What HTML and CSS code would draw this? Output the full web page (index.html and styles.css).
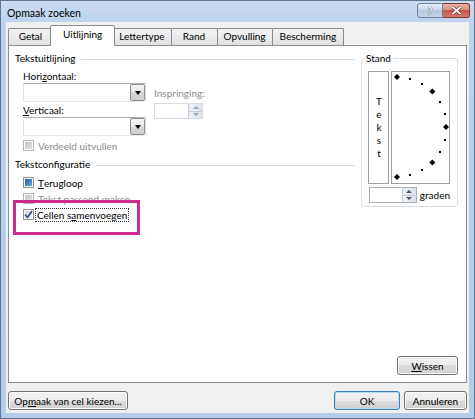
FILE: index.html
```html
<!DOCTYPE html>
<html lang="nl">
<head>
    <meta charset="UTF-8">
    <meta name="viewport" content="width=device-width, initial-scale=1.0">
    <title>Opmaak zoeken</title>
    <link rel="stylesheet" href="styles.css">
</head>
<body>
    <div class="window">
        <div class="titlebar">
            <span class="title">Opmaak zoeken</span>
            <div class="caption-buttons">
                <span class="cap-btn help">?</span>
                <span class="cap-btn close">
                    <svg width="11" height="9" viewBox="0 0 11 9"><path d="M1.5 1 L9.5 8 M9.5 1 L1.5 8" stroke="#5a2a2a" stroke-width="3.2"/><path d="M1.5 1 L9.5 8 M9.5 1 L1.5 8" stroke="#fff" stroke-width="1.8"/></svg>
                </span>
            </div>
        </div>

        <div class="client">
            <div class="tabs">
                <div class="tab">Getal</div>
                <div class="tab active">Uitlijning</div>
                <div class="tab">Lettertype</div>
                <div class="tab">Rand</div>
                <div class="tab">Opvulling</div>
                <div class="tab">Bescherming</div>
            </div>

            <div class="panel">
                <div class="panel-main">
                    <div class="left">
                        <div class="group-title">Tekstuitlijning</div>
                        <div class="align-fields">
                            <div class="combo-col">
                                <div class="label">Hori<u>z</u>ontaal:</div>
                                <div class="combo"><span class="combo-btn"></span></div>
                                <div class="label label-v"><u>V</u>erticaal:</div>
                                <div class="combo"><span class="combo-btn"></span></div>
                            </div>
                            <div class="indent-col">
                                <div class="label disabled">Inspringing:</div>
                                <div class="spin spin-indent disabled">
                                    <span class="spin-btns"><span class="up"></span><span class="down"></span></span>
                                </div>
                            </div>
                        </div>
                        <div class="check-row disabled first-check"><span class="checkbox"></span>Verdeeld uitvullen</div>

                        <div class="group-title second">Tekstconfiguratie</div>
                        <div class="check-row wrap-row"><span class="checkbox mixed"></span><u>T</u>erugloop</div>
                        <div class="check-row disabled"><span class="checkbox"></span>Tekst passend maken</div>
                        <div class="check-row"><span class="checkbox checked">
                            <svg width="9" height="9" viewBox="0 0 9 9"><path d="M1 4.5 L3.5 7.5 L8 1" fill="none" stroke="#2b4a87" stroke-width="1.6"/></svg>
                        </span><span class="focus">Cellen s<u>a</u>menvoegen</span></div>
                    </div>

                    <div class="stand">
                        <div class="legend">Stand</div>
                        <div class="dial-row">
                            <div class="tekst"><span class="tekst-label">Tekst</span></div>
                            <div class="dial">
                                <svg width="57" height="111" viewBox="0 0 57 111">
                                    <g fill="#000">
                                        <path d="M5 2 L8 5 L5 8 L2 5 Z"/>
                                        <rect x="17" y="6" width="2" height="2"/>
                                        <rect x="29" y="11" width="2" height="2"/>
                                        <path d="M40.4 16.6 L43.4 19.6 L40.4 22.6 L37.4 19.6 Z"/>
                                        <rect x="47" y="29" width="2" height="2"/>
                                        <rect x="52" y="41" width="2" height="2"/>
                                        <path d="M54 52 L57 55 L54 58 L51 55 Z"/>
                                        <rect x="52" y="67" width="2" height="2"/>
                                        <rect x="47" y="79" width="2" height="2"/>
                                        <path d="M40.4 87.4 L43.4 90.4 L40.4 93.4 L37.4 90.4 Z"/>
                                        <rect x="29" y="97" width="2" height="2"/>
                                        <rect x="17" y="102" width="2" height="2"/>
                                        <path d="M5 102 L8 105 L5 108 L2 105 Z"/>
                                    </g>
                                </svg>
                            </div>
                        </div>
                        <div class="degrees">
                            <div class="spin spin-degrees">
                                <span class="spin-btns"><span class="up"></span><span class="down"></span></span>
                            </div>
                            <span class="degrees-label"><u>g</u>raden</span>
                        </div>
                    </div>
                </div>
                <div class="panel-foot">
                    <button class="btn btn-clear"><u>W</u>issen</button>
                </div>
            </div>

            <div class="footer">
                <button class="btn btn-pick">Op<u>m</u>aak van cel kiezen...</button>
                <button class="btn btn-ok default">OK</button>
                <button class="btn btn-cancel">Annuleren</button>
            </div>
        </div>

        <div class="highlight"></div>
    </div>
</body>
</html>
```

FILE: styles.css
```css
body {
    margin: 0;
    font-family: 'Lato', 'Noto Sans', sans-serif;
    font-size: 10px;
    color: #000;
    background: #fff;
}
u {
    text-decoration-thickness: 1px;
    text-underline-offset: 1px;
}
.window {
    position: relative;
    width: 475px;
    height: 419px;
    box-sizing: border-box;
    border: 1px solid #5f7590;
    padding: 0 5px 5px 5px;
    background: linear-gradient(#cadcf2 0, #bdd2ec 22px, #b4cce8 100%);
    display: flex;
    flex-direction: column;
}

/* title bar */
.titlebar {
    height: 21px;
    display: flex;
    align-items: flex-start;
}
.title {
    margin: 6px 0 0 1px;
    line-height: 13px;
    font-size: 10.5px;
}
.caption-buttons {
    margin-left: auto;
    margin-right: -1px;
    margin-top: 2px;
    display: flex;
}
.cap-btn {
    height: 15px;
    box-sizing: border-box;
    border: 1px solid #6f7f96;
    display: flex;
    align-items: center;
    justify-content: center;
}
.help {
    width: 26px;
    border-radius: 3px 0 0 3px;
    background: linear-gradient(#e4ecf7, #c4d5ea 50%, #b3c7e1 50%, #c3d5ec);
    color: #fff;
    font-weight: bold;
    font-size: 11px;
    text-shadow: 0 0 1px #3b4a60, 0 0 1px #3b4a60;
}
.close {
    width: 27px;
    border-left: none;
    border-color: #7a3b35;
    border-radius: 0 3px 3px 0;
    background: linear-gradient(#eab1a8, #d98b7e 50%, #c75446 50%, #d7786a);
}

/* client area */
.client {
    flex: 1;
    background: #f0f0f0;
    padding: 3px 2px 0 2px;
    display: flex;
    flex-direction: column;
}
.tabs {
    display: flex;
    align-items: flex-end;
    height: 21px;
    margin-bottom: -1px;
    position: relative;
    z-index: 1;
}
.tab {
    height: 17px;
    min-width: 45px;
    box-sizing: border-box;
    padding: 0 6px;
    margin-right: -1px;
    border: 1px solid #898c95;
    border-bottom: none;
    border-radius: 2px 2px 0 0;
    background: linear-gradient(#f3f3f3, #ebebeb 50%, #e0e0e0 100%);
    line-height: 15px;
    margin-bottom: 1px;
    text-align: center;
    white-space: nowrap;
}
.tab:nth-child(4) {
    min-width: 47px;
}
.tab:last-child {
    padding: 0 7px;
}
.tab.active {
    height: 21px;
    margin: 0 -3px 0 -2px;
    padding: 0 12px;
    background: #fff;
    line-height: 17px;
    position: relative;
    z-index: 2;
}
.panel {
    height: 338px;
    box-sizing: border-box;
    border: 1px solid #898c95;
    background: #fff;
    display: flex;
    flex-direction: column;
}
.panel-main {
    display: flex;
    gap: 6px;
    padding: 6px 0 0 6px;
}
.left {
    width: 340px;
}
.group-title {
    display: flex;
    align-items: center;
    line-height: 13px;
}
.group-title::after {
    content: '';
    flex: 1;
    border-top: 1px solid #d5dfe5;
    margin-left: 6px;
    margin-top: 1px;
}
.group-title.second {
    margin-top: 6px;
}
.align-fields {
    display: flex;
    padding-left: 8px;
    margin-top: 5px;
}
.label {
    line-height: 13px;
}
.label-v {
    margin-top: 2px;
}
.disabled {
    color: #8d8d8d;
}
.combo {
    width: 123px;
    height: 19px;
    box-sizing: border-box;
    border: 1px solid #abadb3;
    border-color: #abadb3 #dbdfe6 #e3e9ef #e2e3ea;
    display: flex;
    justify-content: flex-end;
}
.combo-btn {
    width: 15px;
    box-sizing: border-box;
    border: 1px solid #8d8f94;
    border-radius: 2px;
    background: linear-gradient(#f4f4f4, #e6e6e6 50%, #d6d6d6 50%, #cfcfcf);
    display: flex;
    align-items: center;
    justify-content: center;
}
.combo-btn::after {
    content: '';
    border-top: 4px solid #000;
    border-left: 3.5px solid transparent;
    border-right: 3.5px solid transparent;
}
.indent-col {
    margin: 17px 0 0 8px;
}
.spin {
    width: 49px;
    height: 16px;
    box-sizing: border-box;
    border: 1px solid #abadb3;
    display: flex;
    justify-content: flex-end;
}
.spin-indent {
    margin-top: 3px;
    border-color: #d9dbe0;
}
.spin-btns {
    width: 13px;
    display: flex;
    flex-direction: column;
    background: linear-gradient(to right, #eef2f7, #d9e2ec);
    border-left: 1px solid #c4cbd4;
}
.spin-btns span {
    flex: 1;
    display: flex;
    align-items: center;
    justify-content: center;
}
.spin-btns .up {
    border-bottom: 1px solid #c4cbd4;
}
.spin-btns .up::after {
    content: '';
    border-bottom: 3px solid #555;
    border-left: 3px solid transparent;
    border-right: 3px solid transparent;
}
.spin-btns .down::after {
    content: '';
    border-top: 3px solid #555;
    border-left: 3px solid transparent;
    border-right: 3px solid transparent;
}
.spin-indent .spin-btns .up::after {
    border-bottom-color: #9aa3ad;
}
.spin-indent .spin-btns .down::after {
    border-top-color: #9aa3ad;
}

/* checkboxes */
.check-row {
    display: flex;
    align-items: center;
    height: 13px;
    padding-left: 8px;
    margin-top: 3px;
}
.first-check {
    margin-top: 3px;
}
.wrap-row {
    margin-top: 5px;
}
.checkbox {
    width: 11px;
    height: 11px;
    box-sizing: border-box;
    border: 1px solid #8e8f8f;
    padding: 1px;
    margin-right: 4px;
    background: #fff;
    display: flex;
    align-items: center;
    justify-content: center;
    position: relative;
}
.checkbox::before {
    content: '';
    width: 7px;
    height: 7px;
    background: linear-gradient(135deg, #cbcfd5, #f6f6f6);
}
.disabled .checkbox {
    border-color: #b4b4b4;
}
.disabled .checkbox::before {
    background: linear-gradient(135deg, #c6c6c6, #e2e2e2);
}
.checkbox.mixed::before {
    background: linear-gradient(135deg, #1f5ea8, #69a8e0);
}
.checkbox.checked svg {
    position: absolute;
    left: 0;
    top: 0;
}
.focus {
    outline: 1px dotted #333;
    outline-offset: 0;
    padding: 0 1px;
    margin-left: -2px;
}

/* orientation group */
.stand {
    width: 97px;
    height: 149px;
    box-sizing: border-box;
    margin-top: 6px;
    border: 1px solid #d5dfe5;
    border-radius: 3px;
    padding: 0 7px 0 6px;
}
.legend {
    margin: -7px 0 0 -4px;
    padding: 0 2px;
    line-height: 13px;
    background: #fff;
    width: max-content;
}
.dial-row {
    display: flex;
    gap: 2px;
    margin-top: 6px;
    height: 113px;
}
.tekst {
    width: 21px;
    box-sizing: border-box;
    border: 1px solid #a0a0a0;
    display: flex;
    align-items: center;
    justify-content: center;
}
.tekst-label {
    writing-mode: vertical-lr;
    text-orientation: upright;
    line-height: 11px;
    letter-spacing: 1px;
}
.dial {
    width: 59px;
    box-sizing: border-box;
    border: 1px solid #a0a0a0;
}
.dial svg {
    display: block;
}
.degrees {
    display: flex;
    align-items: center;
    margin-top: 3px;
}
.spin-degrees {
    margin-left: 1px;
}
.degrees-label {
    margin-left: 3px;
}

/* buttons */
.btn {
    height: 19px;
    box-sizing: border-box;
    border: 1px solid #707070;
    border-radius: 3px;
    background: linear-gradient(#f2f2f2, #ebebeb 50%, #dddddd 50%, #cfcfcf);
    box-shadow: inset 0 0 0 1px #fbfbfb;
    font: inherit;
    color: #000;
    padding: 0;
    white-space: nowrap;
}
.panel-foot {
    margin-top: auto;
    display: flex;
    justify-content: flex-end;
    padding: 0 8px 7px 0;
}
.btn-clear {
    width: 61px;
}
.footer {
    display: flex;
    margin-top: 8px;
}
.btn-pick {
    width: 120px;
}
.btn-ok {
    width: 66px;
    margin-left: auto;
}
.btn-ok.default {
    border-color: #3c7fb1;
    box-shadow: inset 0 0 0 1px #b5ddf5;
}
.btn-cancel {
    width: 63px;
    margin-left: 4px;
}

/* annotation */
.highlight {
    position: absolute;
    left: 12px;
    top: 199px;
    width: 127px;
    height: 35px;
    box-sizing: border-box;
    border: 3px solid #cc2a8e;
}
```
